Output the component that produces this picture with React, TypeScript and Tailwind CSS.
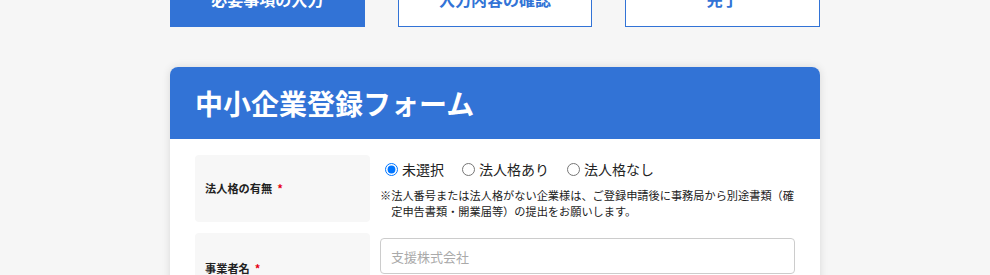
import React from 'react';

const steps = ['必要事項の入力', '入力内容の確認', '完了'];

export default function App() {
  return (
    <div
      className="min-h-[275px] bg-[#f6f6f6] overflow-hidden"
      style={{ fontFamily: '"Noto Sans CJK JP", "Noto Sans", sans-serif' }}
    >
      <div className="w-[650px] mx-auto">
        {/* Steps */}
        <div className="grid grid-cols-3 gap-[33px] -mt-[29px]">
          {steps.map((s, idx) => (
            <div
              key={s}
              className={
                idx === 0
                  ? 'h-[56px] flex items-center justify-center bg-[#3273d6] text-white text-base font-bold border border-[#3273d6]'
                  : 'h-[56px] flex items-center justify-center bg-white text-[#3273d6] text-base font-bold border border-[#3273d6]'
              }
            >
              {s}
            </div>
          ))}
        </div>

        {/* Form card */}
        <div className="mt-[40px] bg-white rounded-lg shadow-[0_0_8px_rgba(0,0,0,0.12)] overflow-hidden">
          <div className="h-[72px] bg-[#3273d6] flex items-center px-[25px]">
            <h1 className="text-[28px] font-bold text-white">中小企業登録フォーム</h1>
          </div>

          <div className="px-[25px] pt-[16px] pb-6 space-y-[11px]">
            {/* Row 1 */}
            <div className="flex gap-[10px]">
              <div className="w-[175px] shrink-0 h-[67px] bg-[#f7f7f7] rounded flex items-center pl-[10px]">
                <span className="text-[11.2px] font-bold text-[#222]">
                  法人格の有無<span className="text-[#e60012] ml-[5px]">*</span>
                </span>
              </div>
              <div className="flex-1 pt-[4px]">
                <div className="flex items-center gap-[18px] text-[14px] text-[#222] leading-5">
                  <label className="flex items-center gap-[4px]">
                    <input type="radio" name="hojin" defaultChecked className="w-[13px] h-[13px] m-0 ml-[5px]" />
                    未選択
                  </label>
                  <label className="flex items-center gap-[4px]">
                    <input type="radio" name="hojin" className="w-[13px] h-[13px] m-0" />
                    法人格あり
                  </label>
                  <label className="flex items-center gap-[4px]">
                    <input type="radio" name="hojin" className="w-[13px] h-[13px] m-0" />
                    法人格なし
                  </label>
                </div>
                <p className="mt-[8px] text-[11.2px] leading-4 text-[#222] pl-[1em] -indent-[1em]">
                  ※法人番号または法人格がない企業様は、ご登録申請後に事務局から別途書類（確定申告書類・開業届等）の提出をお願いします。
                </p>
              </div>
            </div>

            {/* Row 2 */}
            <div className="flex gap-[10px]">
              <div className="w-[175px] shrink-0 h-[70px] bg-[#f7f7f7] rounded flex items-center pl-[10px]">
                <span className="text-[11.2px] font-bold text-[#222]">
                  事業者名<span className="text-[#e60012] ml-[5px]">*</span>
                </span>
              </div>
              <div className="flex-1 pt-[5px]">
                <input
                  type="text"
                  placeholder="支援株式会社"
                  className="w-full h-[36px] border border-[#ccc] rounded px-[10px] text-[13px] placeholder:text-[#aaa] outline-none"
                />
              </div>
            </div>
          </div>
        </div>
      </div>
    </div>
  );
}
